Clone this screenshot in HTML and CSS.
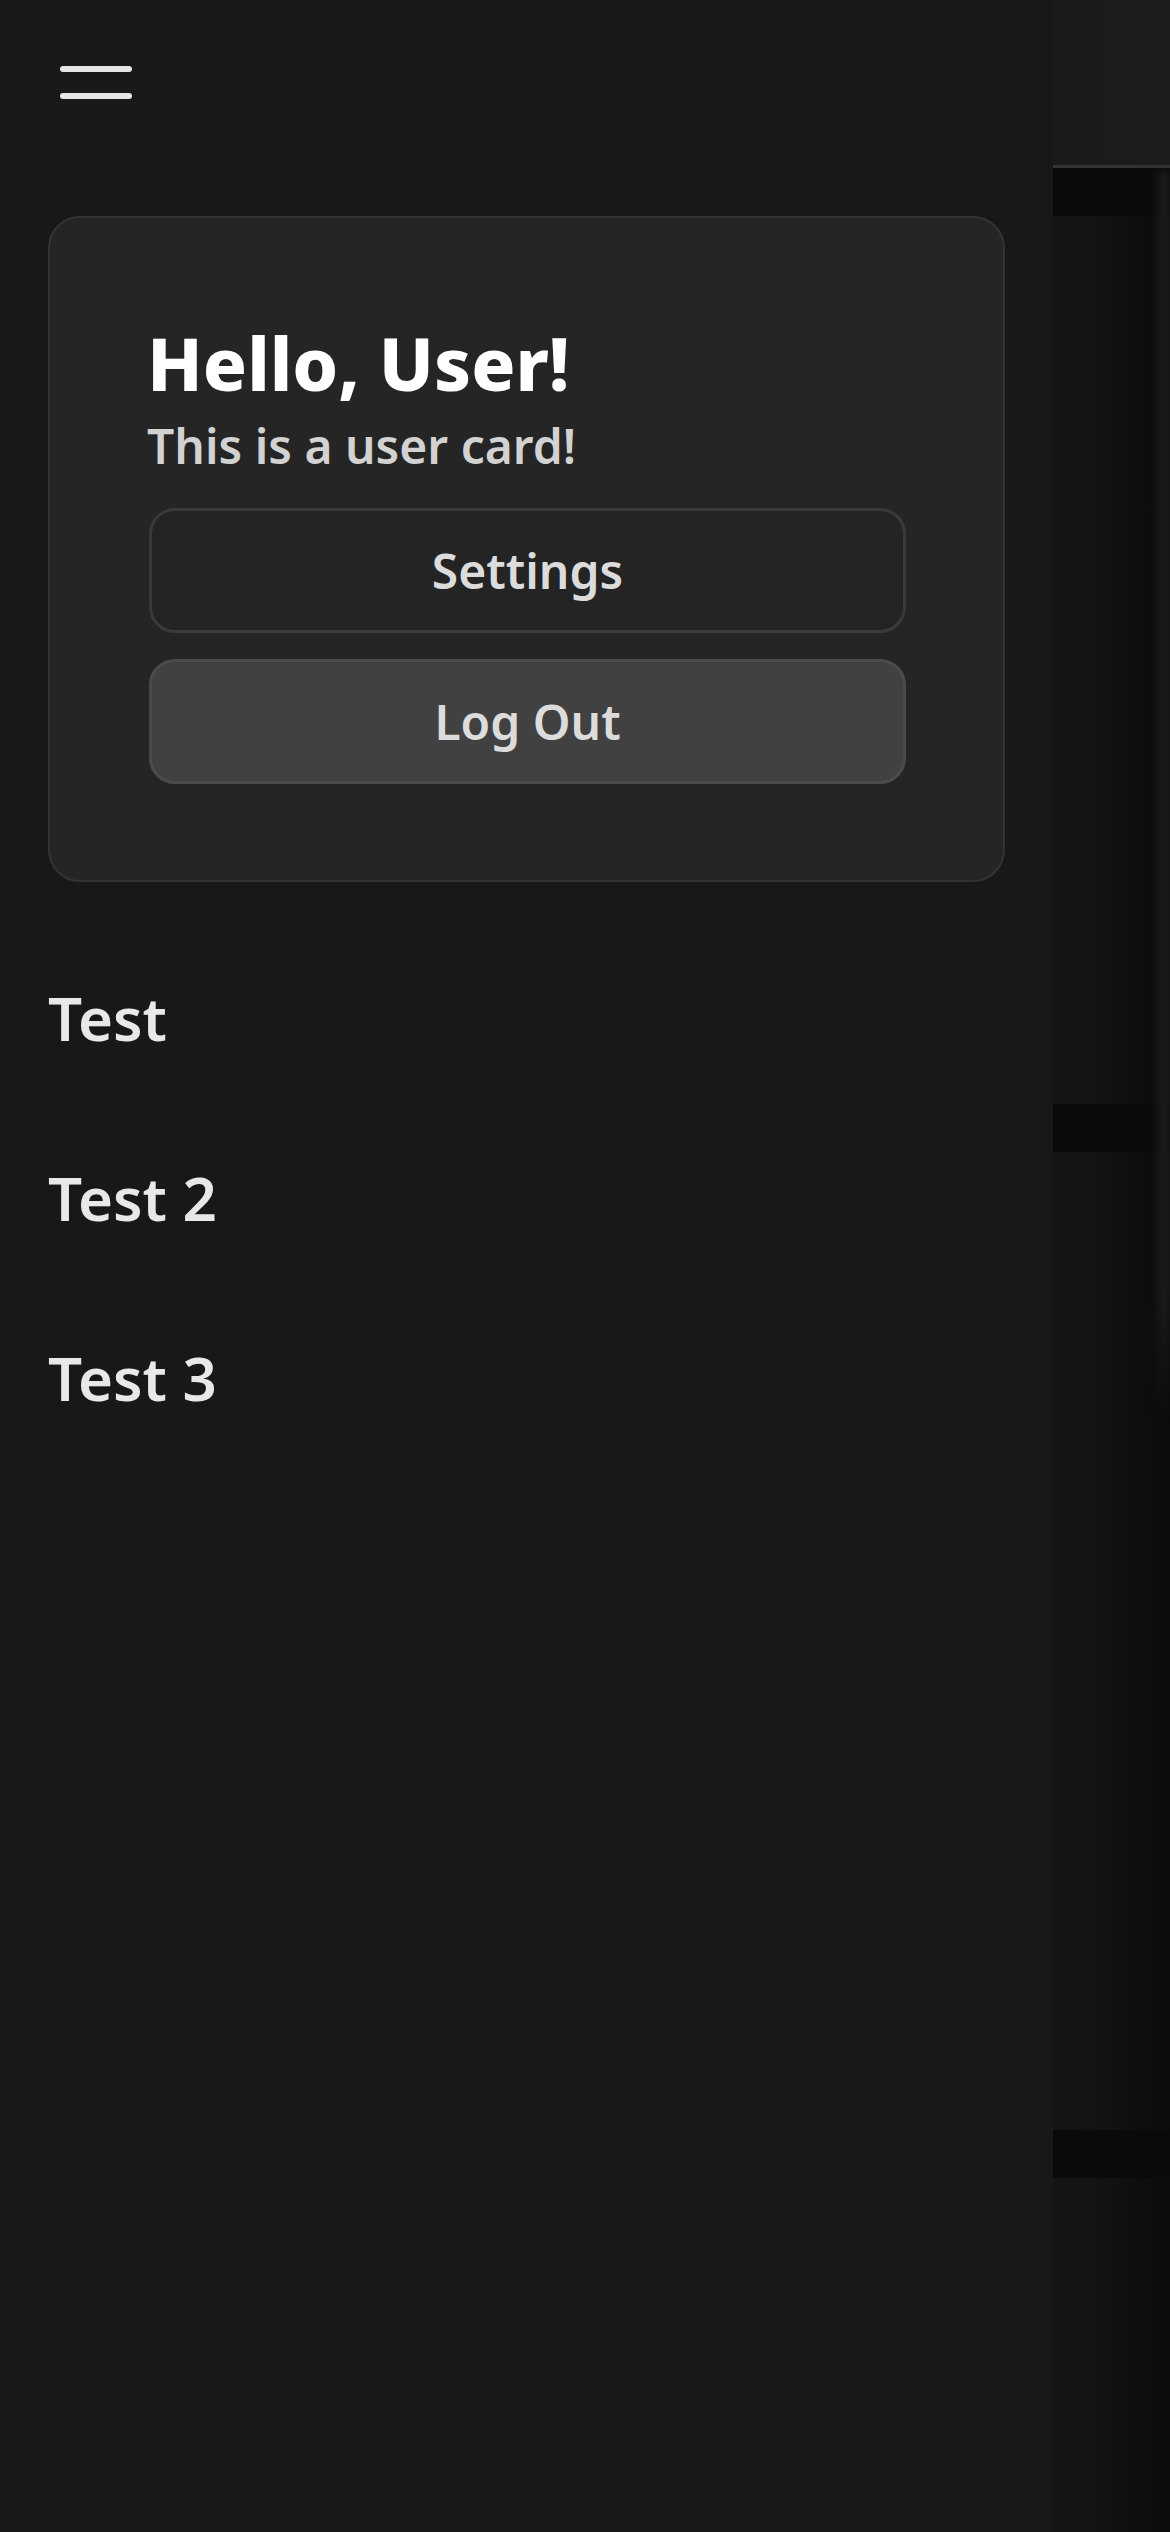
FILE: index.html
```html
<!DOCTYPE html>
<html lang="en">
<head>
<meta charset="utf-8">
<title>Drawer</title>
<link rel="stylesheet" href="styles.css">
</head>
<body>
<div class="screen">
  <aside class="drawer">
    <header class="drawer-top">
      <button class="menu-btn" aria-label="Menu">
        <svg width="72" height="33" viewBox="0 0 72 33">
          <line x1="3" y1="3" x2="69" y2="3" stroke="#e6e6e6" stroke-width="6" stroke-linecap="round"/>
          <line x1="3" y1="30" x2="69" y2="30" stroke="#e6e6e6" stroke-width="6" stroke-linecap="round"/>
        </svg>
      </button>
    </header>
    <section class="user-card">
      <h1 class="user-title">Hello, User!</h1>
      <p class="user-sub">This is a user card!</p>
      <div class="user-actions">
        <button class="btn btn-outline">Settings</button>
        <button class="btn btn-filled">Log Out</button>
      </div>
    </section>
    <nav class="nav">
      <a class="nav-item">Test</a>
      <a class="nav-item">Test 2</a>
      <a class="nav-item">Test 3</a>
    </nav>
  </aside>
  <div class="backdrop">
    <div class="bg-header"></div>
    <div class="bg-body">
      <div class="bg-card bg-card-a"></div>
      <div class="bg-card bg-card-b"></div>
      <div class="bg-card bg-card-c"></div>
    </div>
    <div class="shade"></div>
  </div>
</div>
</body>
</html>
```

FILE: styles.css
```css
* { box-sizing: border-box; }
html, body {
  margin: 0;
  padding: 0;
  background: #0b0b0b;
  font-family: "Noto Sans", "Open Sans", sans-serif;
}
.screen {
  display: flex;
  width: 1170px;
  height: 2532px;
  overflow: hidden;
}
.drawer {
  width: 1053px;
  flex: none;
  height: 100%;
  background: #181818;
  display: flex;
  flex-direction: column;
  padding: 0 48px;
}
.drawer-top {
  height: 216px;
  display: flex;
  align-items: flex-start;
  padding-top: 66px;
}
.menu-btn {
  background: none;
  border: 0;
  padding: 0;
  margin-left: 12px;
  line-height: 0;
}
.user-card {
  background: #252525;
  border: 2px solid #333333;
  border-radius: 32px;
  padding: 103px 97px 96px 97px;
}
.user-title {
  margin: 0;
  font-size: 73px;
  font-weight: 800;
  line-height: 84px;
  color: #ffffff;
}
.user-sub {
  margin: 9px 0 0 0;
  font-size: 48px;
  font-weight: 600;
  line-height: 64px;
  color: #d2d2d2;
}
.user-actions {
  display: flex;
  flex-direction: column;
  gap: 26px;
  margin-top: 30px;
}
.btn {
  height: 125px;
  border-radius: 26px;
  font-family: inherit;
  font-size: 48px;
  font-weight: 600;
  color: #dcdcdc;
  margin: 0 0 0 2px;
}
.btn-outline {
  background: #242424;
  border: 3px solid #3a3a3a;
}
.btn-filled {
  background: #414141;
  border: 3px solid #4b4b4b;
}
.nav {
  display: flex;
  flex-direction: column;
  margin-top: 46px;
}
.nav-item {
  font-size: 60px;
  font-weight: 600;
  line-height: 84px;
  padding: 48px 0;
  color: #e8e8e8;
}
.backdrop {
  flex: 1;
  position: relative;
  height: 100%;
  display: flex;
  flex-direction: column;
  background: #0a0a0a;
}
.bg-header {
  height: 168px;
  flex: none;
  background: linear-gradient(to right, #1a1a1a, #1d1d1d);
  border-bottom: 3px solid #333333;
}
.bg-body {
  display: flex;
  flex-direction: column;
  gap: 48px;
  padding-top: 48px;
}
.bg-card {
  flex: none;
  background: linear-gradient(to right, #151515 0, #131313 50px, #0e0e0e 85px, #0c0c0c 100%);
}
.bg-card-a { height: 888px; }
.bg-card-b { height: 978px; }
.bg-card-c { height: 400px; }
.shade {
  position: absolute;
  top: 170px;
  right: 0;
  width: 12px;
  height: 1250px;
  background: linear-gradient(to bottom, rgba(30,30,30,0.9) 0, rgba(30,30,30,0.9) 90%, rgba(30,30,30,0) 100%);
  filter: blur(4px);
}
```
